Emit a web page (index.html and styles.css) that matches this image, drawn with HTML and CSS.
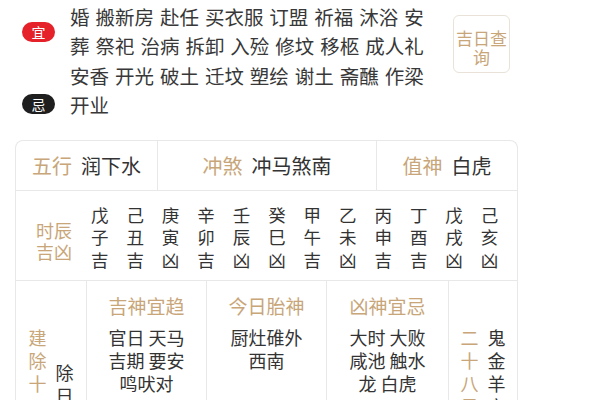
FILE: index.html
```html
<!DOCTYPE html>
<html lang="zh-CN">
<head>
<meta charset="utf-8">
<title>黄历</title>
<link rel="stylesheet" href="styles.css">
</head>
<body>
<div class="page">
  <section class="top">
    <div class="lists">
      <div class="entry">
        <span class="badge badge-yi">宜</span>
        <p class="items">婚 搬新房 赴任 买衣服 订盟 祈福 沐浴 安葬 祭祀 治病 拆卸 入殓 修坟 移柩 成人礼 安香 开光 破土 迁坟 塑绘 谢土 斋醮 作梁</p>
      </div>
      <div class="entry">
        <span class="badge badge-ji">忌</span>
        <p class="items">开业</p>
      </div>
    </div>
    <a class="query">吉日查询</a>
  </section>

  <section class="table">
    <div class="info">
      <div class="cell"><span class="lbl">五行</span><span class="val">润下水</span></div>
      <div class="cell"><span class="lbl">冲煞</span><span class="val">冲马煞南</span></div>
      <div class="cell"><span class="lbl">值神</span><span class="val">白虎</span></div>
    </div>

    <div class="hours">
      <div class="hours-label">时辰<br>吉凶</div>
      <div class="hours-grid">
        <div class="hour">戊<br>子<br>吉</div>
        <div class="hour">己<br>丑<br>吉</div>
        <div class="hour">庚<br>寅<br>凶</div>
        <div class="hour">辛<br>卯<br>吉</div>
        <div class="hour">壬<br>辰<br>凶</div>
        <div class="hour">癸<br>巳<br>凶</div>
        <div class="hour">甲<br>午<br>吉</div>
        <div class="hour">乙<br>未<br>凶</div>
        <div class="hour">丙<br>申<br>吉</div>
        <div class="hour">丁<br>酉<br>吉</div>
        <div class="hour">戊<br>戌<br>凶</div>
        <div class="hour">己<br>亥<br>凶</div>
      </div>
    </div>

    <div class="gods">
      <div class="gcell gside gside-center">
        <div class="vert gold">建除十二神</div>
        <div class="vert">除日</div>
      </div>
      <div class="gcell">
        <div class="ghead">吉神宜趋</div>
        <div class="gbody">官日 天马<br>吉期 要安<br>鸣吠对</div>
      </div>
      <div class="gcell">
        <div class="ghead">今日胎神</div>
        <div class="gbody">厨灶碓外<br>西南</div>
      </div>
      <div class="gcell">
        <div class="ghead">凶神宜忌</div>
        <div class="gbody">大时 大败<br>咸池 触水<br>龙 白虎</div>
      </div>
      <div class="gcell gside">
        <div class="vert gold">二十八星宿</div>
        <div class="vert">鬼金羊宿</div>
      </div>
    </div>
  </section>
</div>
</body>
</html>
```

FILE: styles.css
```css
* { box-sizing: border-box; }

body {
  margin: 0;
  background: #ffffff;
  font-family: "Noto Sans CJK SC", "Noto Sans", sans-serif;
  color: #333333;
}

.page {
  width: 600px;
  height: 400px;
  overflow: hidden;
}

/* ---------- top: 宜 / 忌 ---------- */
.top {
  display: flex;
  align-items: flex-start;
  height: 140px;
}

.lists {
  width: 426px;
  padding-top: 2px;
}

.entry {
  display: flex;
  align-items: flex-start;
}

.badge {
  flex: none;
  width: 33px;
  height: 20px;
  margin-left: 22px;
  margin-right: 15px;
  border-radius: 10px;
  color: #ffffff;
  font-size: 14px;
  line-height: 20px;
  text-align: center;
}

.badge-yi {
  background: #e5212a;
  margin-top: 20px;
}

.badge-ji {
  background: #1f1f1f;
  margin-top: 4px;
}

.items {
  margin: 0;
  width: 358px;
  font-size: 19.5px;
  line-height: 29.3px;
  word-spacing: 1.6px;
  color: #383838;
}

.query {
  flex: none;
  display: block;
  margin-left: 27px;
  margin-top: 15px;
  width: 57px;
  height: 58px;
  padding-top: 12px;
  border: 1px solid #e8e2d8;
  border-radius: 6px;
  color: #c8a679;
  font-size: 17px;
  line-height: 19px;
  text-align: center;
}

/* ---------- table ---------- */
.table {
  margin-left: 15px;
  width: 503px;
  border: 1px solid #e8e8e8;
  border-bottom: none;
  border-radius: 8px 8px 0 0;
}

.gold, .lbl { color: #c8a679; }

.info {
  display: grid;
  grid-template-columns: 141px 219px 141px;
  height: 50px;
  border-bottom: 1px solid #e8e8e8;
}

.info .cell {
  display: flex;
  align-items: center;
  justify-content: center;
  gap: 9px;
  font-size: 20px;
}

.info .cell + .cell { border-left: 1px solid #e8e8e8; }

.hours {
  display: flex;
  align-items: center;
  height: 90px;
  border-bottom: 1px solid #e8e8e8;
}

.hours-label {
  margin-left: 20px;
  margin-top: 10px;
  width: 36px;
  font-size: 18px;
  line-height: 21px;
  color: #c8a679;
}

.hours-grid {
  display: grid;
  grid-template-columns: repeat(12, 35.45px);
  margin-left: 10px;
  margin-top: 4px;
  font-size: 17.5px;
  line-height: 22.5px;
  text-align: center;
  color: #333333;
}

.gods {
  display: grid;
  grid-template-columns: 70px 120px 120px 122px 69px;
  min-height: 200px;
}

.gcell + .gcell { border-left: 1px solid #e8e8e8; }

.ghead {
  padding-top: 13px;
  font-size: 19px;
  line-height: 24px;
  color: #c8a679;
  text-align: center;
}

.gbody {
  margin-top: 8px;
  font-size: 18px;
  line-height: 23px;
  text-align: center;
}

.gside {
  display: flex;
  justify-content: center;
  align-items: flex-start;
  gap: 9px;
  padding-top: 45px;
}

.gside-center { align-items: center; align-self: start; }

.vert {
  width: 18px;
  font-size: 18px;
  line-height: 23px;
}
```
